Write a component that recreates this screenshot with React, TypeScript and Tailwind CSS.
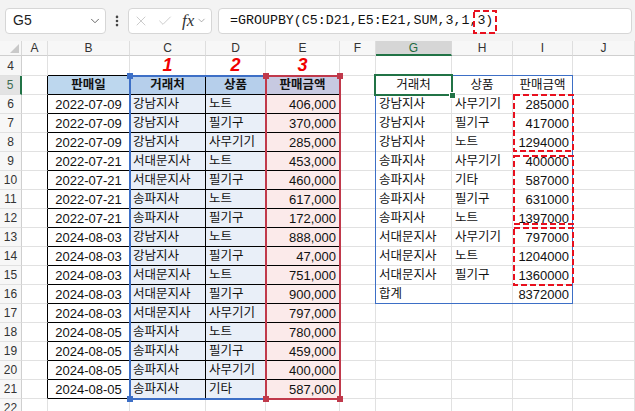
import React from 'react';
import { ChevronDown, EllipsisVertical, X, Check } from 'lucide-react';

const src = [
  ['2022-07-09', '강남지사', '노트', '406,000'],
  ['2022-07-09', '강남지사', '필기구', '370,000'],
  ['2022-07-09', '강남지사', '사무기기', '285,000'],
  ['2022-07-21', '서대문지사', '노트', '453,000'],
  ['2022-07-21', '서대문지사', '필기구', '460,000'],
  ['2022-07-21', '송파지사', '노트', '617,000'],
  ['2022-07-21', '송파지사', '필기구', '172,000'],
  ['2024-08-03', '강남지사', '노트', '888,000'],
  ['2024-08-03', '강남지사', '필기구', '47,000'],
  ['2024-08-03', '서대문지사', '노트', '751,000'],
  ['2024-08-03', '서대문지사', '필기구', '900,000'],
  ['2024-08-03', '서대문지사', '사무기기', '797,000'],
  ['2024-08-05', '송파지사', '노트', '780,000'],
  ['2024-08-05', '송파지사', '필기구', '459,000'],
  ['2024-08-05', '송파지사', '사무기기', '400,000'],
  ['2024-08-05', '송파지사', '기타', '587,000'],
];

const grouped = [
  ['강남지사', '사무기기', '285000'],
  ['강남지사', '필기구', '417000'],
  ['강남지사', '노트', '1294000'],
  ['송파지사', '사무기기', '400000'],
  ['송파지사', '기타', '587000'],
  ['송파지사', '필기구', '631000'],
  ['송파지사', '노트', '1397000'],
  ['서대문지사', '사무기기', '797000'],
  ['서대문지사', '노트', '1204000'],
  ['서대문지사', '필기구', '1360000'],
  ['합계', '', '8372000'],
];

const letters = ['A', 'B', 'C', 'D', 'E', 'F', 'G', 'H', 'I', 'J'];
const rows = Array.from({ length: 19 }, (_, i) => i + 4); // 4..22

interface Cell {
  t?: string;
  align?: 'l' | 'c' | 'r';
  bg?: string;
  bold?: boolean;
  big?: boolean;
}

const getCell = (r: number, c: number): Cell => {
  if (r === 4 && c >= 3 && c <= 5) return { t: String(c - 2), align: 'c', big: true };
  if (r === 5) {
    if (c === 2) return { t: '판매일', align: 'c', bold: true, bg: 'bg-[#bdd7ee]' };
    if (c === 3) return { t: '거래처', align: 'c', bold: true, bg: 'bg-[#b6cfeb]' };
    if (c === 4) return { t: '상품', align: 'c', bold: true, bg: 'bg-[#b6cfeb]' };
    if (c === 5) return { t: '판매금액', align: 'c', bold: true, bg: 'bg-[#c7c9e1]' };
    if (c === 7) return { t: '거래처', align: 'c' };
    if (c === 8) return { t: '상품', align: 'c' };
    if (c === 9) return { t: '판매금액', align: 'c' };
  }
  if (r >= 6 && r <= 21) {
    const row = src[r - 6];
    if (c === 2) return { t: row[0], align: 'c' };
    if (c === 3) return { t: row[1], align: 'l', bg: 'bg-[#e9eff8]' };
    if (c === 4) return { t: row[2], align: 'l', bg: 'bg-[#e9eff8]' };
    if (c === 5) return { t: row[3], align: 'r', bg: 'bg-[#fbeaea]' };
  }
  if (r >= 6 && r <= 16) {
    const row = grouped[r - 6];
    if (c === 7) return { t: row[0], align: 'l' };
    if (c === 8) return { t: row[1], align: 'l' };
    if (c === 9) return { t: row[2], align: 'r' };
  }
  return {};
};

const isKorean = (s: string) => /[가-힣]/.test(s);

function DashedBox({ className, w, h }: { className: string; w: number; h: number }) {
  return (
    <svg className={`absolute pointer-events-none ${className}`} width={w} height={h}>
      <rect x={1} y={1} width={w - 2} height={h - 2} fill="none" stroke="#e8101e" strokeWidth={2} strokeDasharray="6 3" />
    </svg>
  );
}

function FormulaBar() {
  return (
    <div className="h-[41px] bg-[#f3f3f3] flex items-center pl-[5px] pr-[3px]">
      {/* Name box */}
      <div className="w-[101px] h-[26px] bg-white border border-[#d6d6d6] rounded-[4px] flex items-center justify-between pl-[7px] pr-[3px]">
        <span className="text-[14px] text-[#222]">G5</span>
        <ChevronDown className="w-[14px] h-[14px] text-[#555]" strokeWidth={1.5} />
      </div>
      <div className="w-[22px] flex justify-center">
        <EllipsisVertical className="w-[14px] h-[14px] text-[#444]" strokeWidth={2.5} />
      </div>
      <div className="w-[84px] h-[26px] bg-white border border-[#d6d6d6] rounded-[4px] flex items-center pl-[4px]">
        <X className="w-[16px] h-[16px] text-[#c4c4c4]" strokeWidth={1.3} />
        <Check className="w-[16px] h-[16px] text-[#c4c4c4] ml-[8px]" strokeWidth={1.3} />
        <span className="ml-[9px] font-['Liberation_Serif',serif] italic text-[17px] leading-none text-[#333]">fx</span>
        <ChevronDown className="w-[11px] h-[11px] text-[#888] ml-[2px]" strokeWidth={1.5} />
      </div>
      <div className="ml-[6px] flex-1 h-[26px] bg-white border border-[#d6d6d6] rounded-[4px] flex items-center pl-[11px]">
        <span className="font-['Liberation_Mono',monospace] text-[13.3px] text-[#111] whitespace-nowrap">
          =GROUPBY(C5:D21,E5:E21,SUM,3,1,
          <span className="relative">
            3)
            <DashedBox className="-left-[4px] -top-[3px]" w={24} h={24} />
          </span>
        </span>
      </div>
    </div>
  );
}

export default function App() {
  return (
    <div className="w-[635px] h-[411px] overflow-hidden bg-white font-['Liberation_Sans','Noto_Sans_CJK_KR',sans-serif] text-[#111]">
      <FormulaBar />

      <div className="relative">
        <div className="grid grid-cols-[22px_26px_82px_76px_60px_74px_36px_76px_61px_60px_62px] grid-rows-[15px_20px_repeat(18,19px)]">
          {/* Column headers */}
          <div className="relative bg-[#f7f7f7] border-r border-b border-r-[#d8d8d8] border-b-[#cfcfcf]">
            <svg className="absolute right-[2px] bottom-[2px]" width={9} height={9}>
              <polygon points="9,0 9,9 0,9" fill="#c9c9c9" />
            </svg>
          </div>
          {letters.map((l) => (
            <div
              key={l}
              className={`flex items-center justify-center text-[12px] leading-none border-r ${
                l === 'G'
                  ? 'bg-[#d6d6d6] text-[#1e6b40] border-b-2 border-b-[#217346] border-r-[#d8d8d8]'
                  : 'bg-[#f7f7f7] text-[#333] border-b border-b-[#cfcfcf] border-r-[#dedede]'
              }`}
            >
              {l}
            </div>
          ))}

          {/* Rows */}
          {rows.map((r) => (
            <React.Fragment key={r}>
              <div
                className={`flex items-center justify-center text-[12px] leading-none border-b border-b-[#e1e1e1] ${
                  r === 5
                    ? 'bg-[#e3e3e3] text-[#3d6b52] border-r-2 border-r-[#217346]'
                    : 'bg-[#f7f7f7] text-[#333] border-r border-r-[#cfcfcf]'
                }`}
              >
                {r}
              </div>
              {letters.map((_, i) => {
                const c = i + 1;
                const cell = getCell(r, c);
                const inTable = r >= 5 && r <= 21 && c >= 2 && c <= 5;
                const blackR = inTable || (c === 1 && r >= 5 && r <= 21);
                const blackB = inTable || (r === 4 && c >= 2 && c <= 5);
                const text = cell.t ?? '';
                return (
                  <div
                    key={c}
                    className={`flex overflow-hidden whitespace-nowrap border-r border-b px-[3px] ${
                      cell.big ? 'items-end pb-[1px]' : 'items-center'
                    } ${blackR ? 'border-r-black' : 'border-r-[#e1e1e1]'} ${
                      blackB ? 'border-b-black' : 'border-b-[#e1e1e1]'
                    } ${cell.bg ?? 'bg-white'} ${
                      cell.align === 'c' ? 'justify-center' : cell.align === 'r' ? 'justify-end' : 'justify-start'
                    }`}
                  >
                    {cell.big ? (
                      <span className="text-[18px] leading-none font-bold italic text-[#f00000]">{text}</span>
                    ) : (
                      <span
                        className={`leading-none ${isKorean(text) ? 'text-[12.5px]' : 'text-[13px]'} ${
                          cell.bold ? 'font-bold' : ''
                        }`}
                      >
                        {text}
                      </span>
                    )}
                  </div>
                );
              })}
            </React.Fragment>
          ))}
        </div>

        {/* Range highlight C5:D21 */}
        <div className="absolute left-[129px] top-[34px] w-[138px] h-[325px] border-2 border-[#3d6fc6] pointer-events-none" />
        {/* Range highlight E5:E21 */}
        <div className="absolute left-[265px] top-[34px] w-[76px] h-[325px] border-2 border-[#c0394b] pointer-events-none" />
        <div className="absolute left-[127px] top-[32px] w-[6px] h-[6px] bg-[#3d6fc6]" />
        <div className="absolute left-[127px] top-[355px] w-[6px] h-[6px] bg-[#3d6fc6]" />
        <div className="absolute left-[263px] top-[32px] w-[6px] h-[6px] bg-[#c0394b]" />
        <div className="absolute left-[337px] top-[32px] w-[6px] h-[6px] bg-[#c0394b]" />
        <div className="absolute left-[263px] top-[355px] w-[6px] h-[6px] bg-[#c0394b]" />
        <div className="absolute left-[337px] top-[355px] w-[6px] h-[6px] bg-[#c0394b]" />

        {/* Spill range G5:I16 */}
        <div className="absolute left-[375px] top-[34px] w-[198px] h-[229px] border border-[#3d6fc6] pointer-events-none" />
        {/* Active cell G5 */}
        <div className="absolute left-[374px] top-[33px] w-[79px] h-[22px] border-2 border-[#217346] pointer-events-none" />
        <div className="absolute left-[449px] top-[51px] w-[7px] h-[7px] bg-[#217346] border border-white" />

        {/* Group markers */}
        <DashedBox className="left-[513px] top-[53px]" w={61} h={58} />
        <DashedBox className="left-[513px] top-[114px]" w={61} h={70} />
        <DashedBox className="left-[513px] top-[186px]" w={61} h={59} />
      </div>
    </div>
  );
}
